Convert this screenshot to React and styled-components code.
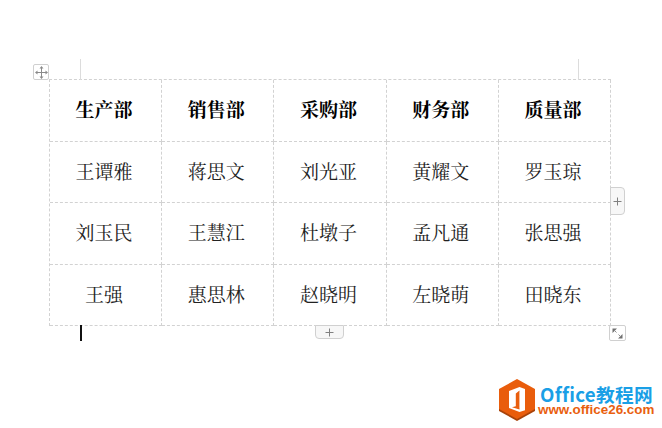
import React from "react";
import styled, { createGlobalStyle } from "styled-components";

const Global = createGlobalStyle`
  html, body { margin: 0; padding: 0; background: #fff; }
`;

const Page = styled.div`
  position: relative;
  width: 662px;
  height: 428px;
  overflow: hidden;
  padding: 79px 0 0 49px;
  box-sizing: border-box;
  background: #fff;
  font-family: "Noto Serif CJK SC", "Liberation Serif", "Noto Sans CJK SC", serif;
  color: #1a1a1a;
`;

const Grid = styled.div`
  display: grid;
  width: 562px;
  height: 247px;
  grid-template-columns: repeat(5, 1fr);
  grid-template-rows: repeat(4, 1fr);
  border-top: 1px dashed #d2d2d2;
  border-left: 1px dashed #d2d2d2;
  box-sizing: border-box;
`;

const Cell = styled.div`
  display: flex;
  align-items: center;
  justify-content: center;
  padding: 0 3px 3px 0;
  border-right: 1px dashed #d2d2d2;
  border-bottom: 1px dashed #d2d2d2;
  font-size: 19px;
  font-weight: ${(p) => (p.$head ? 700 : 400)};
  color: ${(p) => (p.$head ? "#000" : "#222")};
`;

const MarginMark = styled.div`
  position: absolute;
  top: 59px;
  left: ${(p) => p.$x}px;
  width: 1px;
  height: 21px;
  background: #dcdcdc;
`;

const Handle = styled.div`
  position: absolute;
  display: flex;
  align-items: center;
  justify-content: center;
  box-sizing: border-box;
  background: ${(p) => p.$bg || "#fff"};
  border: 1px solid #d0d0d0;
  border-radius: ${(p) => p.$radius || "2px"};
  left: ${(p) => p.$x}px;
  top: ${(p) => p.$y}px;
  width: ${(p) => p.$w}px;
  height: ${(p) => p.$h}px;
`;

const Caret = styled.div`
  position: absolute;
  left: 80px;
  top: 325px;
  width: 2px;
  height: 16px;
  background: #111;
`;

const Logo = styled.div`
  position: absolute;
  left: 498px;
  top: 378px;
  display: flex;
  align-items: flex-start;
  gap: 2px;
`;

const LogoText = styled.div`
  display: flex;
  flex-direction: column;
  margin-top: 6px;
`;

const LogoTitle = styled.div`
  font-family: "Noto Sans CJK SC", "Liberation Sans", sans-serif;
  font-size: 18.7px;
  line-height: 19px;
  font-weight: 700;
  color: #1a9fe6;
  letter-spacing: 0.3px;
  margin-left: 2px;
  white-space: nowrap;
`;

const LogoUrl = styled.div`
  font-family: "Liberation Sans", sans-serif;
  font-size: 13.4px;
  line-height: 14px;
  font-weight: 700;
  color: #e9600f;
  white-space: nowrap;
`;

const PlusIcon = () => (
  <svg width="9" height="9" viewBox="0 0 9 9">
    <path d="M4.5 0.5v8M0.5 4.5h8" stroke="#808080" strokeWidth="1" fill="none" />
  </svg>
);

const MoveIcon = () => (
  <svg width="13" height="13" viewBox="0 0 13 13">
    <path d="M6.5 1.5v10M1.5 6.5h10" stroke="#8a8a8a" strokeWidth="1" fill="none" />
    <path d="M6.5 0 8.5 2.500h-4zM6.5 13l2-2.500h-4zM0 6.500l2.500-2v4zM13 6.500l-2.500-2v4z" fill="#8a8a8a" />
  </svg>
);

const ResizeIcon = () => (
  <svg width="13" height="13" viewBox="0 0 13 13">
    <path d="M1.500 1.500h4.500L1.500 6z M11.500 11.500H7l4.500-4.500z" fill="#707070" />
    <path d="M3.500 3.500 5.500 5.500M7.500 7.500 9.500 9.500" stroke="#909090" strokeWidth="1" fill="none" />
  </svg>
);

const OfficeLogo = () => (
  <svg width="38" height="44" viewBox="0 0 38 44">
    <path d="M19 3 37 13v20L19 43 1 33V13z" fill="#a8430a" />
    <path d="M19 1 37 11v20L19 41 1 31V11z" fill="#e95d0c" />
    <path
      d="M21.500 9 11 13v17l10.500 4 5.500-1.800V11z M21.500 12.500v19l-7.500-2.200 3.800-1V15.500z"
      fill="#fff"
      fillRule="evenodd"
    />
    <path d="M21.500 14h3v16h-3z" fill="#fff" opacity="0.35" />
  </svg>
);

const rows = [
  ["生产部", "销售部", "采购部", "财务部", "质量部"],
  ["王谭雅", "蒋思文", "刘光亚", "黄耀文", "罗玉琼"],
  ["刘玉民", "王慧江", "杜墩子", "孟凡通", "张思强"],
  ["王强", "惠思林", "赵晓明", "左晓萌", "田晓东"],
];

export default function App() {
  return (
    <Page>
      <Global />
      <MarginMark $x={80} />
      <MarginMark $x={578} />
      <Grid>
        {rows.flatMap((row, r) =>
          row.map((name) => (
            <Cell key={name} $head={r === 0}>
              {name}
            </Cell>
          ))
        )}
      </Grid>
      <Handle $x={33} $y={64} $w={16} $h={16}>
        <MoveIcon />
      </Handle>
      <Handle $x={610} $y={187} $w={15} $h={28} $bg="#f7f7f7" $radius="0 4px 4px 0">
        <PlusIcon />
      </Handle>
      <Handle $x={315} $y={325} $w={29} $h={14} $bg="#f7f7f7" $radius="0 0 4px 4px">
        <PlusIcon />
      </Handle>
      <Handle $x={609} $y={325} $w={17} $h={16}>
        <ResizeIcon />
      </Handle>
      <Caret />
      <Logo>
        <OfficeLogo />
        <LogoText>
          <LogoTitle>Office教程网</LogoTitle>
          <LogoUrl>www.office26.com</LogoUrl>
        </LogoText>
      </Logo>
    </Page>
  );
}
